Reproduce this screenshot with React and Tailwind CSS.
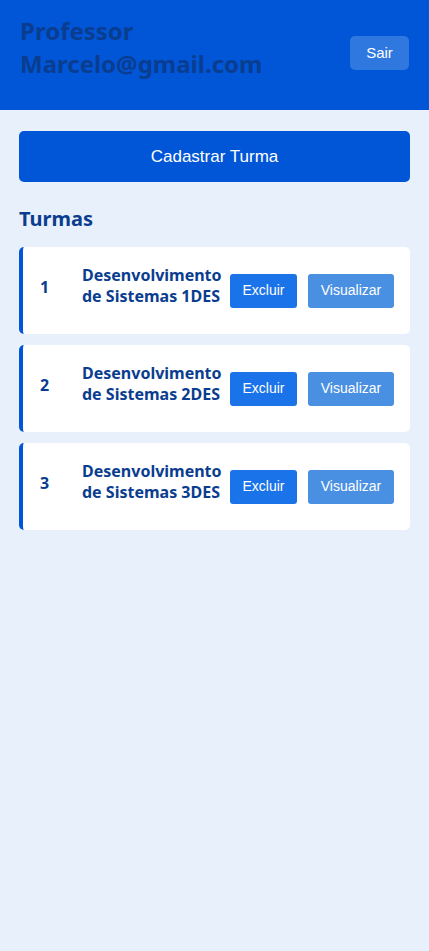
import React from 'react';

const turmas = [
  { id: 1, nome: 'Desenvolvimento de Sistemas 1DES' },
  { id: 2, nome: 'Desenvolvimento de Sistemas 2DES' },
  { id: 3, nome: 'Desenvolvimento de Sistemas 3DES' },
];

export default function App() {
  return (
    <div className="min-h-[951px] bg-[#e8f0fb] font-['Noto_Sans','Open_Sans',sans-serif]">
      <header className="h-[110px] bg-[#0056d6] px-5 flex items-center justify-between">
        <h1 className="text-[24px] leading-[33px] font-bold text-[#0a3d8f] -mt-[16px]">
          Professor
          <br />
          Marcelo@gmail.com
        </h1>
        <button className="w-[59px] h-[34px] rounded-[5px] bg-[#2f78e0] text-white text-[15px] -mt-[4px] font-['Liberation_Sans',Arial,sans-serif]">
          Sair
        </button>
      </header>

      <main className="px-[19px] pt-[21px]">
        <button className="w-full h-[51px] rounded-[5px] bg-[#0056d6] text-white text-[17px] font-['Liberation_Sans',Arial,sans-serif]">
          Cadastrar Turma
        </button>

        <h2 className="mt-[24px] text-[20px] leading-[26px] font-bold text-[#0a3d8f]">Turmas</h2>

        <div className="mt-[15px] flex flex-col gap-[11px]">
          {turmas.map((t) => (
            <div
              key={t.id}
              className="h-[87px] bg-white rounded-[5px] border-l-4 border-[#0056d6] pl-[17px] pr-[16px] flex items-center"
            >
              <span className="w-[42px] text-[16px] font-bold text-[#0a3d8f] -translate-y-[4px]">{t.id}</span>
              <span className="w-[140px] text-[16px] leading-[21px] font-bold text-[#0a3d8f] -translate-y-[5px]">
                {t.nome}
              </span>
              <div className="ml-auto flex gap-[11px] font-['Liberation_Sans',Arial,sans-serif]">
                <button className="w-[67px] h-[34px] rounded-[3px] bg-[#1a73e8] text-white text-[14px]">
                  Excluir
                </button>
                <button className="w-[86px] h-[34px] rounded-[3px] bg-[#4a90e2] text-white text-[14px]">
                  Visualizar
                </button>
              </div>
            </div>
          ))}
        </div>
      </main>
    </div>
  );
}
